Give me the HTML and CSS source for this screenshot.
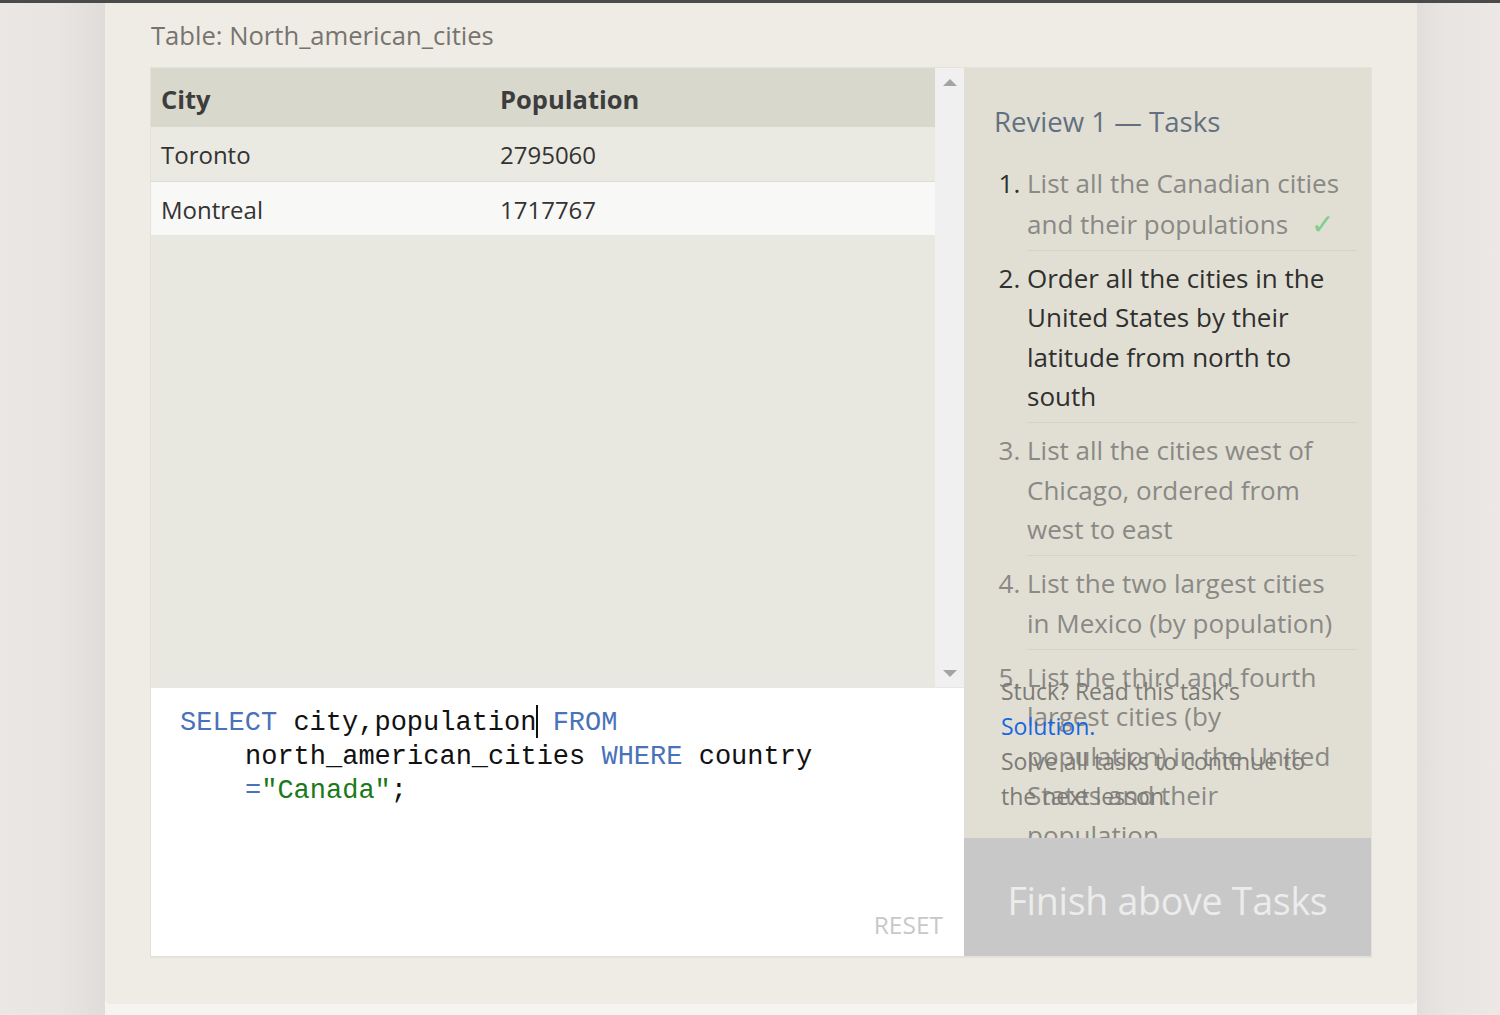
FILE: index.html
```html
<!DOCTYPE html>
<html lang="en">
<head>
<meta charset="utf-8">
<title>Review 1 — Tasks</title>
<link rel="stylesheet" href="styles.css">
</head>
<body>
<div class="topbar"></div>
<div class="page">
  <div class="gutter gutter-left"></div>
  <main class="main">
    <section class="panel">
      <div class="table-title">Table: North_american_cities</div>
      <div class="frame">
        <div class="left-col">
          <div class="results">
            <div class="table-area">
              <table class="data">
                <thead>
                  <tr><th class="col-city">City</th><th>Population</th></tr>
                </thead>
                <tbody>
                  <tr class="odd"><td>Toronto</td><td>2795060</td></tr>
                  <tr class="even"><td>Montreal</td><td>1717767</td></tr>
                </tbody>
              </table>
            </div>
            <div class="scrollbar">
              <span class="arrow arrow-up"></span>
              <span class="arrow arrow-down"></span>
            </div>
          </div>
          <div class="editor">
            <div class="code-line"><span class="kw">SELECT</span> city,population<span class="cursor"></span> <span class="kw">FROM</span></div>
            <div class="code-line indent">north_american_cities <span class="kw">WHERE</span> country</div>
            <div class="code-line indent"><span class="kw">=</span><span class="str">"Canada"</span>;</div>
            <div class="reset">RESET</div>
          </div>
        </div>
        <div class="right-col">
          <div class="tasks">
            <h2 class="tasks-title">Review 1 — Tasks</h2>
            <ol class="task-list">
              <li class="done">List all the Canadian cities and their populations <span class="check">✓</span></li>
              <li class="active">Order all the cities in the United States by their latitude from north to south</li>
              <li>List all the cities west of Chicago, ordered from west to east</li>
              <li>List the two largest cities in Mexico (by population)</li>
              <li>List the third and fourth largest cities (by population) in the United States and their population</li>
            </ol>
            <div class="stuck">
              <div>Stuck? Read this task's</div>
              <div><a class="solution" href="#">Solution.</a></div>
              <div>Solve all tasks to continue to</div>
              <div>the next lesson.</div>
            </div>
          </div>
          <div class="finish">Finish above Tasks</div>
        </div>
      </div>
    </section>
  </main>
  <div class="gutter gutter-right"></div>
</div>
</body>
</html>
```
FILE: styles.css
```css
* { box-sizing: border-box; }

html, body {
  margin: 0;
  padding: 0;
  height: 100%;
}

body {
  font-family: "Open Sans", "Noto Sans", sans-serif;
  background: #ebe7e4;
  overflow: hidden;
}

.topbar {
  height: 3px;
  background: #4a4a4a;
}

.page {
  display: flex;
  height: 1012px;
}

.gutter {
  flex: none;
}

.gutter-left {
  width: 105px;
  background: linear-gradient(to right, #ebe7e4 0%, #e9e5e2 55%, #e0dcd9 100%);
}

.gutter-right {
  width: 83px;
  background: linear-gradient(to right, #e2dedb 0%, #e9e5e2 35%, #ece8e5 100%);
}

.main {
  flex: 1;
  background: #f5f4f0;
}

.panel {
  background: #efece5;
  border-radius: 0 0 5px 5px;
  padding: 16px 45px 46px 45px;
}

.table-title {
  font-size: 25.6px;
  color: #777470;
  line-height: 34px;
  margin: 0 0 14px 1px;
}

.frame {
  display: flex;
  border: 1px solid #e3e1d8;
  border-bottom-width: 2px;
  height: 891px;
}

.left-col {
  width: 813px;
  display: flex;
  flex-direction: column;
}

.results {
  display: flex;
  height: 620px;
  border-bottom: 1px solid #e6e6e2;
}

.table-area {
  flex: 1;
  background: #e9e8e0;
}

.data {
  width: 100%;
  border-collapse: collapse;
  font-size: 24px;
  color: #333;
}

.data th,
.data td {
  text-align: left;
  padding: 0 10px;
}

.data th {
  height: 59px;
  background: #d9d8cd;
  font-weight: 700;
  font-size: 25.5px;
  color: #3d3d3d;
  padding-top: 3px;
}

.data .col-city {
  width: 339px;
}

.data td {
  height: 54px;
  padding-top: 2px;
}

.data .odd td {
  background: #eae9e2;
  border-bottom: 1px solid #dedcd5;
}

.data .even td {
  background: #f8f8f7;
}

.scrollbar {
  width: 29px;
  background: #f0f0f0;
  position: relative;
}

.arrow {
  position: absolute;
  left: 8px;
  width: 0;
  height: 0;
  border-left: 7px solid transparent;
  border-right: 7px solid transparent;
}

.arrow-up {
  top: 11px;
  border-bottom: 7px solid #a3a3a3;
}

.arrow-down {
  bottom: 10px;
  border-top: 7px solid #a3a3a3;
}

.editor {
  flex: 1;
  background: #fff;
  position: relative;
  padding: 17px 20px 0 29px;
  font-family: "Liberation Mono", "DejaVu Sans Mono", monospace;
  font-size: 27px;
  line-height: 34px;
  color: #111;
}

.code-line {
  white-space: pre;
}

.code-line.indent {
  padding-left: 65px;
}

.kw {
  color: #4a72b8;
}

.str {
  color: #1a7a1a;
}

.cursor {
  display: inline-block;
  width: 0;
  height: 33px;
  border-left: 2px solid #111;
  vertical-align: -8px;
  margin-right: -2px;
}

.reset {
  position: absolute;
  right: 21px;
  bottom: 16px;
  font-family: "Open Sans", "Noto Sans", sans-serif;
  font-size: 24.5px;
  color: #c8c8c8;
  line-height: 30px;
}

.right-col {
  flex: 1;
  display: flex;
  flex-direction: column;
}

.tasks {
  flex: none;
  height: 770px;
  background: #e1dfd4;
  padding: 33px 14px 0 30px;
  overflow: hidden;
  position: relative;
}

.tasks-title {
  margin: 0;
  font-weight: 400;
  font-size: 27.6px;
  line-height: 40px;
  color: #637080;
}

.task-list {
  margin: 15px 0 0 0;
  padding: 0 0 0 33px;
  font-size: 26px;
  line-height: 39.5px;
  color: #8a8985;
}

.task-list li {
  padding: 8px 10px 5.5px 0;
  border-bottom: 1px solid #d6d4c9;
}

.task-list li::marker {
  color: #8a8985;
}

.task-list li.done::marker,
.task-list li.active::marker {
  color: #2f2f2f;
}

.task-list li.active {
  color: #2f2f2f;
}

.check {
  color: #7fcf8a;
  margin-left: 16px;
  font-size: 28px;
}

.stuck {
  position: absolute;
  left: 37px;
  top: 606px;
  font-size: 23px;
  line-height: 35px;
  color: #7c7a76;
}

.solution {
  color: #1a66e0;
  text-decoration: none;
}

.finish {
  flex: 1;
  background: #c8c8c8;
  color: #ececec;
  font-size: 37.6px;
  display: flex;
  align-items: center;
  justify-content: center;
  letter-spacing: -0.3px;
  padding-top: 6px;
}
```
